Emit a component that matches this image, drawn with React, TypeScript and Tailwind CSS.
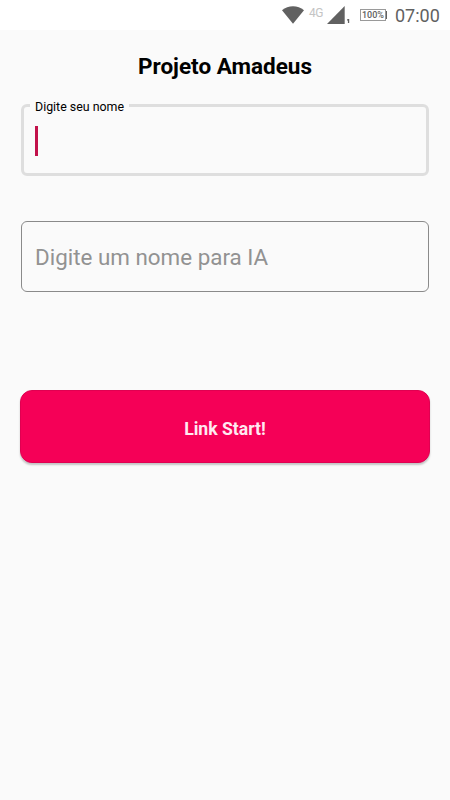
function StatusBar() {
  return (
    <div className="flex h-[30px] items-center bg-white pl-[282px] text-[#616161]">
      <svg className="h-[18px] w-[22px] shrink-0" viewBox="0 0 22 18">
        <path d="M0 4.2C6.2-1 15.8-1 22 4.2L11 17.7Z" fill="#616161" />
      </svg>
      <span className="ml-[5px] w-[14px] pb-[5px] text-[12px] leading-none tracking-[-0.5px] text-[#c4c4c4]">4G</span>
      <svg className="ml-1 h-[18px] w-[24px] shrink-0" viewBox="0 0 24 18">
        <path d="M0 18L17.7 0V18Z" fill="#616161" />
        <path d="M20 13.6L21 13H22.2V17H20.9V14.4H20Z" fill="#616161" />
      </svg>
      <div className="ml-[9px] flex items-center">
        <div className="flex h-[12px] w-[26px] items-center justify-center border border-[#9a9a9a] text-[9px] leading-none font-medium">
          <span>100%</span>
        </div>
        <div className="h-[8px] w-px bg-[#616161]" />
      </div>
      <span className="mt-px ml-[8px] text-[18px] leading-none">07:00</span>
    </div>
  );
}

export default function App() {
  return (
    <div className="h-[800px] w-[450px] overflow-hidden bg-[#fafafa] font-['Roboto',sans-serif]">
      <StatusBar />
      <main className="flex flex-col px-5 pt-[22px]">
        <h1 className="text-center text-[22.5px] leading-[29px] font-bold text-black">Projeto Amadeus</h1>

        <div className="relative mx-px mt-[23px] flex h-[72px] items-center rounded-[6px] border-[3px] border-[#dedede] pt-[2px] pl-[11px]">
          <label className="absolute -top-[7px] left-[6px] bg-[#fafafa] px-[5px] text-[12.4px] leading-[14px] whitespace-nowrap text-black">
            Digite seu nome
          </label>
          <div className="h-[30px] w-[2.5px] bg-[#c2114a]" />
        </div>

        <div className="mx-px mt-[45px] flex h-[71px] items-center rounded-[6px] border border-[#8a8a8a] pt-px pl-[13px]">
          <span className="text-[22.4px] leading-none text-[#929292]">Digite um nome para IA</span>
        </div>

        <button className="mt-[98px] h-[73px] rounded-[12px] border border-[#e00051] bg-[#f50057] pt-[5px] text-[17.6px] font-bold text-[#ffe9f1] shadow-[0_2px_2px_rgba(0,0,0,0.22)]">
          Link Start!
        </button>
      </main>
    </div>
  );
}
